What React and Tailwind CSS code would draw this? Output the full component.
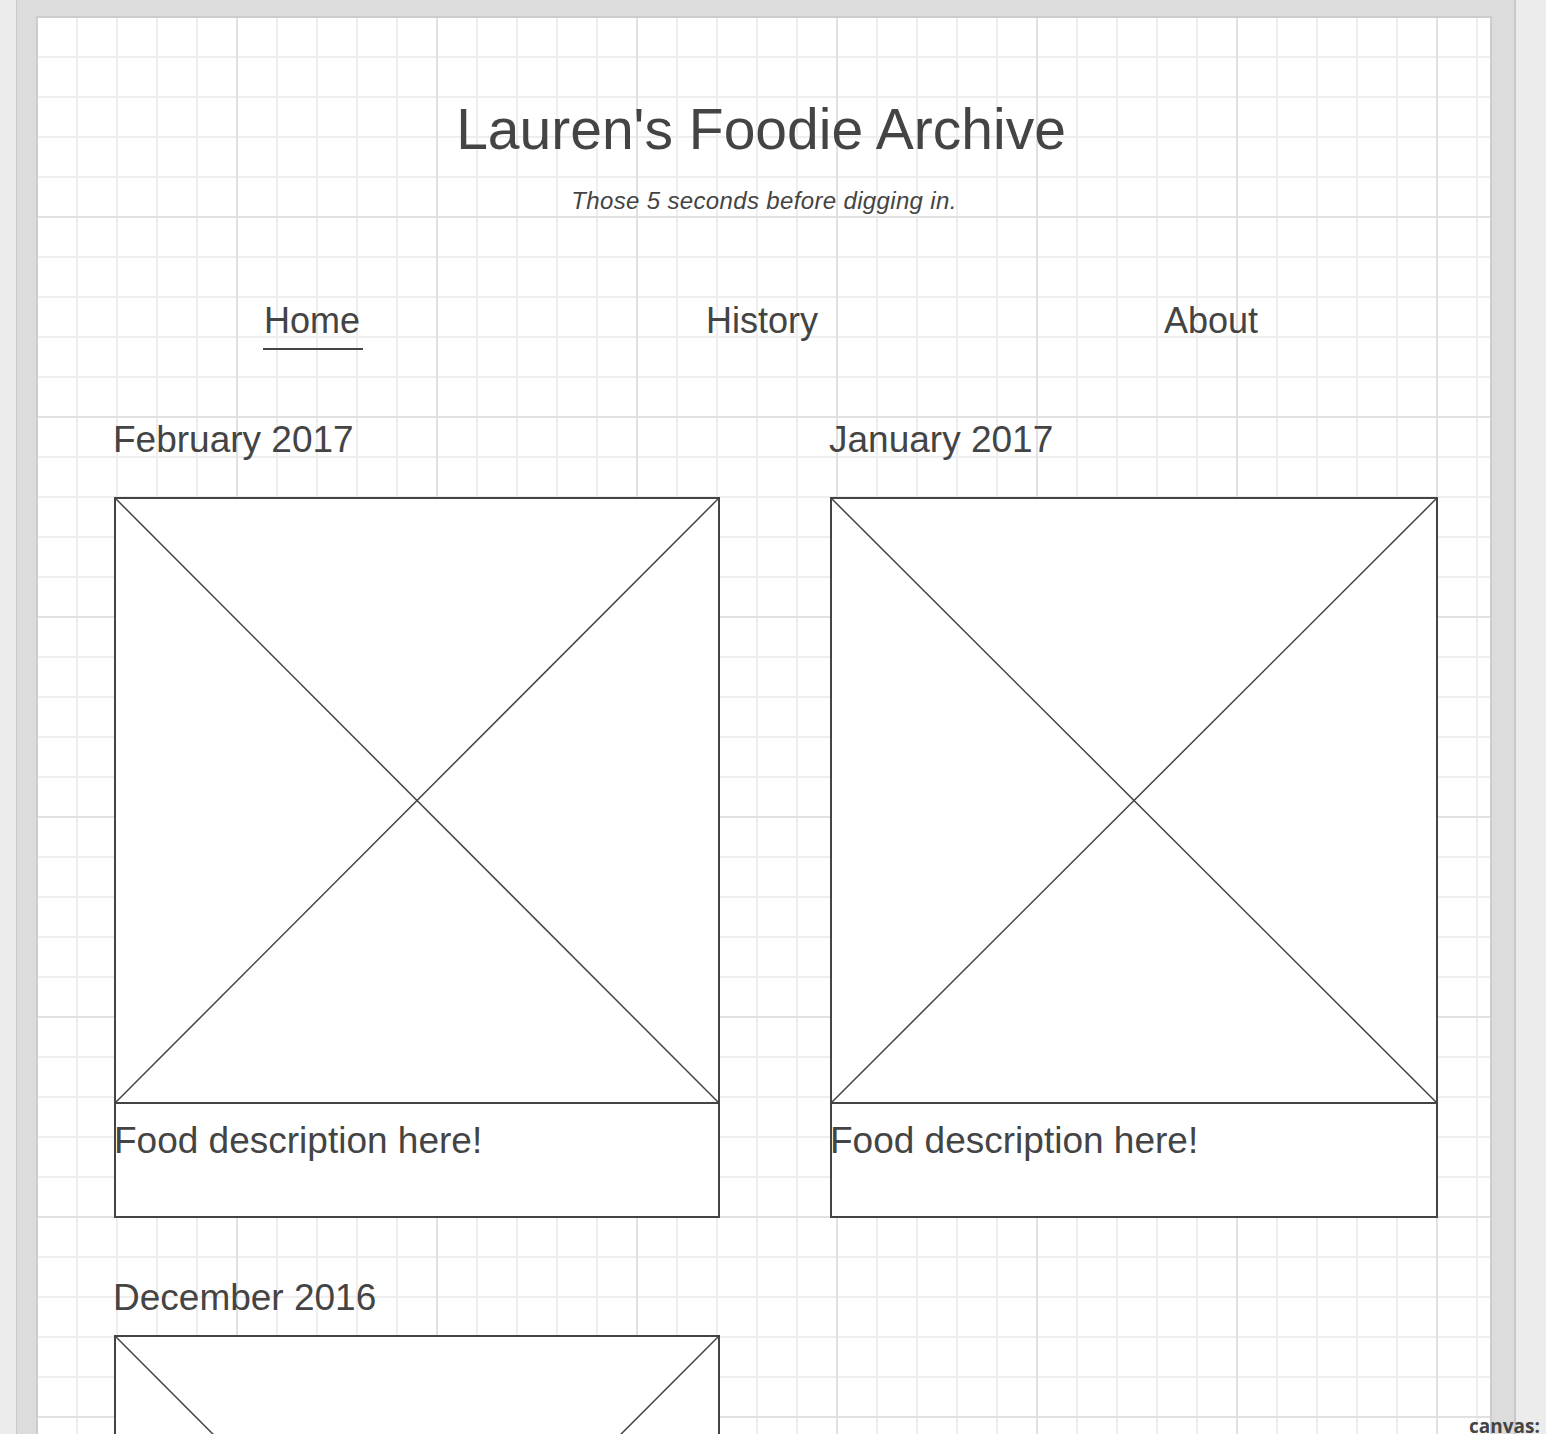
import React from "react";

const font = { fontFamily: '"Liberation Sans", Arial, Helvetica, sans-serif' };

function Placeholder({ h = 607 }) {
  return (
    <div className="relative border-2 border-[#444444] bg-white" style={{ height: h }}>
      <svg className="absolute inset-0 h-full w-full" viewBox="0 0 100 100" preserveAspectRatio="none">
        <line x1="0" y1="0" x2="100" y2="100" stroke="#444444" strokeWidth="1.5" vectorEffect="non-scaling-stroke" />
        <line x1="100" y1="0" x2="0" y2="100" stroke="#444444" strokeWidth="1.5" vectorEffect="non-scaling-stroke" />
      </svg>
    </div>
  );
}

function Card({ month, gapClass, showDesc = true }) {
  return (
    <div className="flex flex-col">
      <div className="-ml-[1px] text-[37px] leading-none text-[#444444]">{month}</div>
      <div className={gapClass}>
        <Placeholder />
        {showDesc && (
          <div className="h-[114px] border-x-2 border-b-2 border-[#444444] bg-white pt-[18px]">
            <div className="-ml-[2px] text-[37px] leading-none text-[#444444]">Food description here!</div>
          </div>
        )}
      </div>
    </div>
  );
}

export default function App() {
  return (
    <div className="relative flex h-[1434px] w-full overflow-hidden bg-[#ececec]" style={font}>
      <div className="ml-[16px] h-full w-[1500px] shrink-0 border-l border-r-2 border-[#c8c8c8] bg-[#dcdcdc] pl-[19px] pt-[16px]">
        <div className="min-h-[1500px] w-[1456px] border-2 border-[#cccccc] bg-white bg-[linear-gradient(to_right,#e1e1e1_2px,transparent_2px),linear-gradient(to_bottom,#e1e1e1_2px,transparent_2px),linear-gradient(to_right,#eeeeee_2px,transparent_2px),linear-gradient(to_bottom,#eeeeee_2px,transparent_2px)] bg-[size:200px_200px,200px_200px,40px_40px,40px_40px] bg-[position:198px_198px,198px_198px,38px_38px,38px_38px] pt-[83px]">
          <h1 className="pr-[6px] text-center text-[57px] font-normal leading-none text-[#444444]">
            Lauren's Foodie Archive
          </h1>
          <p className="mt-[31px] text-center text-[24px] italic leading-none tracking-[0.35px] text-[#444444]">
            Those 5 seconds before digging in.
          </p>
          <nav className="ml-[50px] mt-[89.5px] grid grid-cols-[450px_450px_450px] items-start text-[36px] leading-none text-[#444444]">
            <div className="flex justify-center">
              <span className="inline-block border-b-2 border-[#444444] pb-[9.5px] pl-[1px] pr-[3px]">Home</span>
            </div>
            <div className="flex justify-center">
              <span className="inline-block -ml-[2px]">History</span>
            </div>
            <div className="flex justify-center">
              <span className="inline-block -ml-[4px]">About</span>
            </div>
          </nav>
          <div className="ml-[76px] mt-[71px] grid grid-cols-[606px_608px] gap-x-[110px] gap-y-[61px]">
            <Card month="February 2017" gapClass="mt-[39px]" />
            <Card month="January 2017" gapClass="mt-[39px]" />
            <Card month="December 2016" gapClass="mt-[19px]" />
          </div>
        </div>
      </div>
      <div
        className="absolute left-[1469px] top-[1417px] text-[19px] font-bold leading-none text-[#444444]"
        style={{ fontFamily: '"Open Sans", "Liberation Sans", sans-serif' }}
      >
        canvas:
      </div>
    </div>
  );
}
